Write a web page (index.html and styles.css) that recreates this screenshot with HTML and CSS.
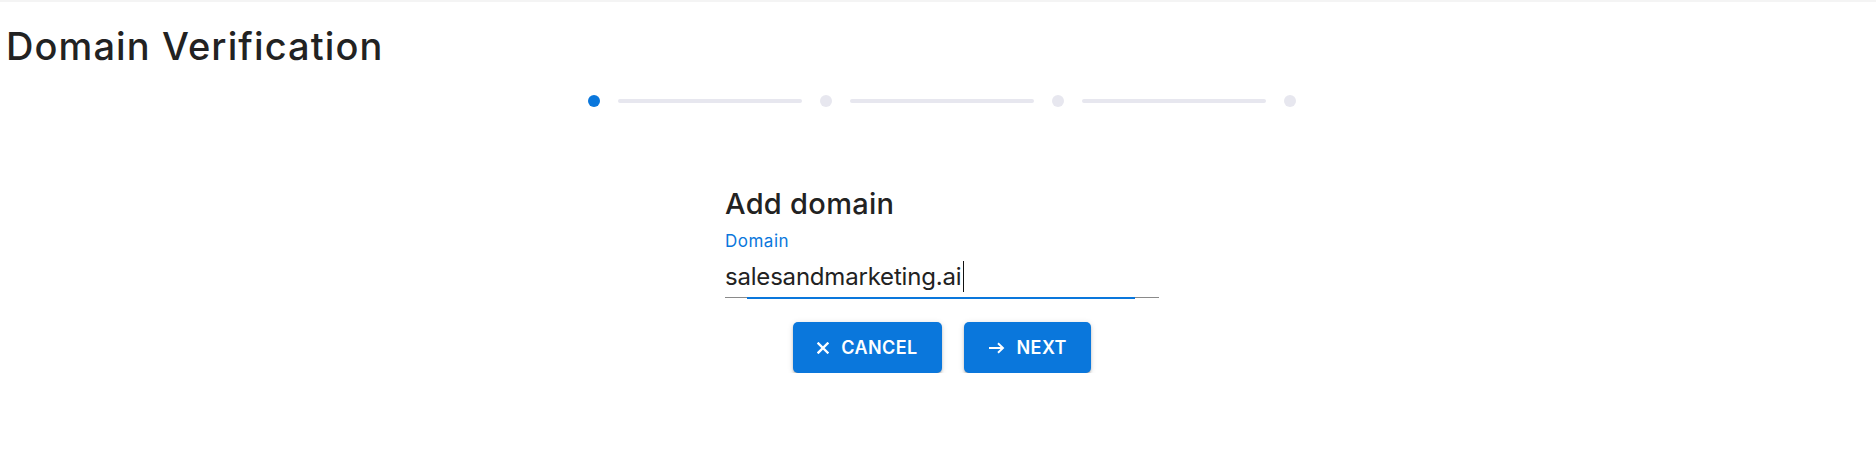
FILE: index.html
```html
<!DOCTYPE html>
<html lang="en">
<head>
<meta charset="utf-8">
<title>Domain Verification</title>
<link rel="stylesheet" href="styles.css">
</head>
<body>
<div class="topbar"></div>
<h1 class="title">Domain Verification</h1>
<main class="content">
  <div class="stepper">
    <span class="dot active"></span>
    <span class="bar"></span>
    <span class="dot"></span>
    <span class="bar"></span>
    <span class="dot"></span>
    <span class="bar"></span>
    <span class="dot"></span>
  </div>
  <section class="form">
    <h2 class="form-title">Add domain</h2>
    <label class="field-label">Domain</label>
    <div class="field">
      <div class="field-value">salesandmarketing.ai<span class="caret"></span></div>
      <span class="focus-line"></span>
    </div>
    <div class="actions">
      <button class="btn" type="button">
        <svg class="icon" viewBox="0 0 12 12" width="12" height="12"><path d="M1.5 1.5 L10.5 10.5 M10.5 1.5 L1.5 10.5" stroke="#fff" stroke-width="2.4" stroke-linecap="square"/></svg>
        <span>CANCEL</span>
      </button>
      <button class="btn" type="button">
        <svg class="icon arrow" viewBox="0 0 17 12" width="17" height="12"><path d="M1 6 H15 M10 1.2 L15 6 L10 10.8" stroke="#fff" stroke-width="1.9" fill="none"/></svg>
        <span>NEXT</span>
      </button>
    </div>
  </section>
</main>
</body>
</html>
```

FILE: styles.css
```css
* { box-sizing: border-box; }
html, body { margin: 0; padding: 0; background: #fff; }
body {
  font-family: Inter, "Noto Sans", sans-serif;
  color: #222;
}
.topbar {
  height: 2px;
  background: #f4f4f4;
}
.title {
  margin: 22px 0 0 0;
  padding-left: 6px;
  font-size: 38px;
  line-height: 44px;
  font-weight: 500;
  letter-spacing: 1.1px;
  color: #222;
}
.content {
  padding-left: 8px;
  display: flex;
  flex-direction: column;
  align-items: center;
}
.stepper {
  margin-top: 27px;
  display: flex;
  align-items: center;
  height: 12px;
}
.dot {
  width: 12px;
  height: 12px;
  border-radius: 50%;
  background: #e7e7ef;
}
.dot.active { background: #0a77dc; }
.bar {
  width: 184px;
  height: 4px;
  border-radius: 2px;
  margin: 0 18px;
  background: #e7e7ef;
}
.form {
  width: 434px;
  margin-top: 79px;
  display: flex;
  flex-direction: column;
}
.form-title {
  margin: 0;
  font-size: 29px;
  line-height: 36px;
  font-weight: 500;
  letter-spacing: 0.3px;
  color: #222;
}
.field-label {
  margin-top: 9px;
  font-size: 17px;
  line-height: 20px;
  letter-spacing: 0.5px;
  color: #0a77dc;
}
.field {
  position: relative;
  margin-top: 10px;
  padding-bottom: 5px;
  border-bottom: 1px solid #8a8a8a;
}
.field-value {
  font-size: 24px;
  line-height: 30px;
  letter-spacing: -0.2px;
  color: #222;
  display: flex;
  align-items: center;
}
.caret {
  display: inline-block;
  width: 1px;
  height: 31px;
  margin-left: 2px;
  background: #111;
}
.focus-line {
  position: absolute;
  left: 22px;
  right: 24px;
  bottom: -2px;
  height: 2px;
  background: #0a77dc;
}
.actions {
  margin-top: 24px;
  display: flex;
  justify-content: center;
  gap: 22px;
}
.btn {
  height: 51px;
  padding: 0 24px;
  border: 0;
  border-radius: 5px;
  background: #0a77dc;
  color: #fff;
  font-family: inherit;
  font-size: 18px;
  font-weight: 600;
  letter-spacing: 0.4px;
  display: flex;
  align-items: center;
  gap: 12px;
  box-shadow: 0 3px 3px -2px rgba(0,0,0,0.25), 0 2px 3px 0 rgba(0,0,0,0.16), 0 1px 6px 0 rgba(0,0,0,0.12);
}
.icon { display: block; }
```
